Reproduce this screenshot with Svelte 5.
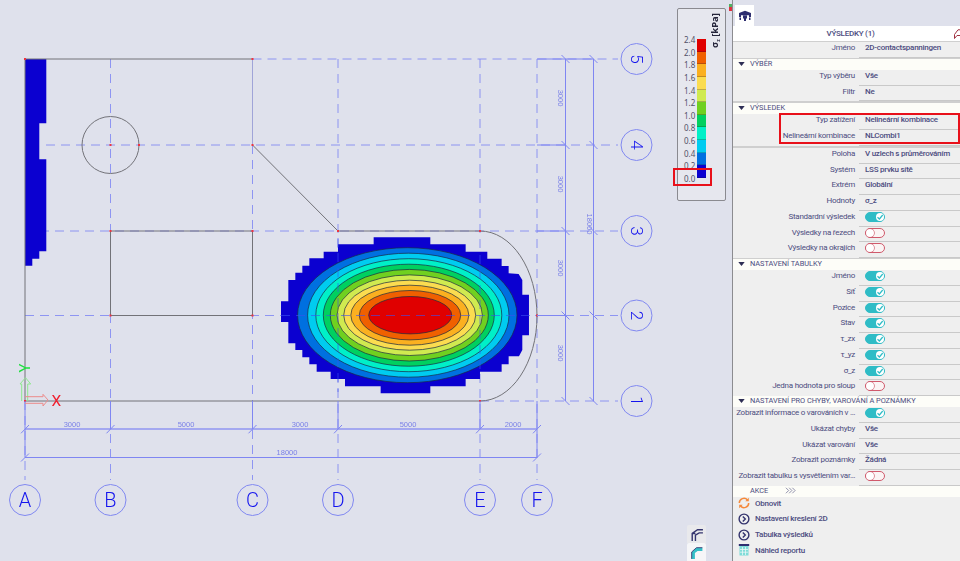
<script>
  const xs = [[25,'A'],[110.5,'B'],[252.5,'C'],[338,'D'],[480,'E'],[537,'F']];
  const ys = [[59,'5'],[145,'4'],[231,'3'],[315.5,'2'],[401,'1']];
  const gridX = [[25,401],[110.5,59],[252.5,145],[338,59],[480,59],[537,59]];
  const gridY = [[59,252.5],[145,46],[231,25],[315.5,25],[401,480]];
  const hDims = [[72,'3000'],[186,'5000'],[300,'3000'],[408,'5000'],[513,'2000']];
  const vDims = [[98,'3000'],[184,'3000'],[268,'3000'],[353,'3000']];
  const ell = [
    ['#0070e0',407.3,109.7,67.5],['#00ccf0',408.3,100.7,62],['#00f0c8',408.8,93,56.5],['#00d060',408.8,85.5,51],
    ['#70d020',409.3,79,45.8],['#d0ea50',409.7,72.7,40.3],['#fbdc50',409.7,66,35],['#fbb020',409.8,59,30],
    ['#f06000',410,50.7,24.7],['#e00000',410.2,41.5,18.7]
  ];
  const stair = '311,37 481,37 481,58 587,58 587,80 652,80 652,101 695,101 695,123 716,123 716,145 746,147 757,165 757,209 777,209 777,331 757,331 757,375 747,394 716,394 716,418 695,418 695,440 630,440 630,462 587,462 587,484 481,484 481,505 332,505 332,484 225,484 225,462 182,462 182,440 140,440 140,418 118,418 118,397 97,397 97,375 76,375 76,355 55,355 55,291 33,291 33,229 55,229 55,165 76,165 76,143 97,143 97,122 118,122 118,100 161,100 161,80 204,80 204,58 311,58';
  const nodes = [[25,59],[252.5,59],[110.5,145],[139,145],[252.5,145],[110.5,231],[252.5,231],[338,231],[480,231],[537,315.5],[110.5,315.5],[252.5,315.5],[25,401],[480,401]];
  const scale = [
    ['2.4','#e00000'],['2.0','#f06000'],['1.8','#fbb020'],['1.6','#fbdc50'],['1.4','#d0ea50'],['1.2','#70d020'],
    ['1.0','#00d060'],['0.8','#00f0c8'],['0.6','#00ccf0'],['0.4','#0070e0'],['0.2','#0b00d0'],['0.0','']
  ];
  const on = { t: true }, off = { t: false };
  const sections = [
    { rows: [['Jméno', '2D-contactspanningen']] },
    { title: 'VÝBĚR', rows: [['Typ výběru','Vše'],['Filtr','Ne']], sep: 1 },
    { title: 'VÝSLEDEK', rows: [['Typ zatížení','Nelineární kombinace'],['Nelineární kombinace','NLCombi1']], mark: true, sep: 2 },
    { rows: [['Poloha','V uzlech s průměrováním'],['Systém','LSS prvku sítě'],['Extrém','Globální'],['Hodnoty','σ_z'],['Standardní výsledek',on],['Výsledky na řezech',off],['Výsledky na okrajích',off]], sep: 2 },
    { title: 'NASTAVENÍ TABULKY', rows: [['Jméno',on],['Síť',on],['Pozice',on],['Stav',on],['τ_zx',on],['τ_yz',on],['σ_z',on],['Jedna hodnota pro sloup',off]], sep: 1 },
    { title: 'NASTAVENÍ PRO CHYBY, VAROVÁNÍ A POZNÁMKY', rows: [['Zobrazit informace o varováních v …',on],['Ukázat chyby','Vše'],['Ukázat varování','Vše'],['Zobrazit poznámky','Žádná'],['Zobrazit tabulku s vysvětlením var…',off]] }
  ];
</script>

<div class="page">
  <main class="canvas">
    <svg class="drawing" viewBox="0 0 733 561" width="733" height="561">
      <g class="grid">
        {#each gridX as [x, y0]}<line x1={x} y1={y0} x2={x} y2="480" />{/each}
        {#each gridY as [y, x0]}<line x1={x0} y1={y} x2="618" y2={y} />{/each}
      </g>
      <path class="strip" d="M25 59H46.3V123.3H39.3V159.3H46.3V251.3H39.3V258.7H32.3V265.7H25Z" />
      <g transform="translate(270 225) scale(.3333)">
        <polygon class="strip" points={stair} />
      </g>
      {#each ell as [c, cx, rx, ry]}
        <ellipse {cx} cy="315.2" {rx} {ry} fill={c} class="band" />
      {/each}
      <g class="grid over">
        <line x1="338" y1="238" x2="338" y2="392" />
        <line x1="480" y1="255" x2="480" y2="375" />
        <line x1="281" y1="315.5" x2="530" y2="315.5" />
      </g>
      <g class="struct">
        <path d="M25 401V59H252.5" />
        <path d="M25 401H480A57 85 0 0 0 480 231H338L252.5 145" />
        <path class="pale" d="M252.5 59V145" />
        <path d="M110.5 315.5V231H252.5V315.5H110.5" />
        <circle cx="110.5" cy="145" r="28.5" />
      </g>
      {#each nodes as [x, y]}<rect class="node" x={x - 1} y={y - 1} width="2" height="2" />{/each}

      <g class="dim">
        <path class="thick" d="M25 429H537" />
        <path d="M25 457.5H537M565.5 59V401M593.5 59V401" />
        <path d="M25 401V457.5M110.5 401V429M252.5 401V429M338 401V429M480 401V429M537 401V457.5" />
        <path d="M537 59H593.5M537 145H565.5M537 231H565.5M537 315.5H565.5" />
        {#each xs as [x]}<path d="M{x - 4} 433.3L{x + 4} 425" />{/each}
        <path d="M21 461.5L29 453.5M533 461.5L541 453.5" />
        {#each ys as [y]}<path d="M561.5 {y - 4}L569.5 {y + 4}" /><path d="M589.5 {y - 4}L597.5 {y + 4}" />{/each}
      </g>
      {#each hDims as [x, t]}<text class="dimtext" {x} y="427" text-anchor="middle">{t}</text>{/each}
      <text class="dimtext" x="287" y="455" text-anchor="middle">18000</text>
      {#each vDims as [y, t]}<text class="dimtext" transform="translate(558 {y}) rotate(90)" text-anchor="middle">{t}</text>{/each}
      <text class="dimtext" transform="translate(586.500 224) rotate(90)" text-anchor="middle">18000</text>

      {#each xs as [x, t]}
        <circle class="axis" cx={x} cy="500" r="15.5" />
        <text class="axlabel" {x} y="507" text-anchor="middle">{t}</text>
      {/each}
      {#each ys as [y, t]}
        <circle class="axis" cx="636.5" cy={y} r="15.5" />
        <text class="axlabel digit" transform="translate(631 {y}) rotate(90)" text-anchor="middle">{t}</text>
      {/each}

      <path class="arrow-g" d="M21.7 401V384H20L25.500 377.700L30.700 384H27.700V401" />
      <path class="arrow-r" d="M25 396.700H43V394.300L48 400L43 406V403.300H25" />
      <text class="letter-x" x="56.300" y="406" text-anchor="middle">X</text>
      <text class="letter-y" transform="translate(30 368) rotate(-90)" text-anchor="middle">Y</text>
    </svg>

    <aside class="legend">
      <span class="legend-title">σ<sub>z</sub> [kPa]</span>
      <div class="legend-scale">
        {#each scale as [v, c]}
          <div class="legend-row">
            <span class="legend-val">{v}</span>
            {#if c}<span class="legend-swatch" style="background:{c}"></span>{/if}
          </div>
        {/each}
      </div>
    </aside>
    <div class="hl hl-legend"></div>

    <div class="sidetabs">
      <div class="stab">
        <svg viewBox="0 0 14 14" width="15" height="15"><path class="ic-navy" d="M3 13V6L8 2.500H13M6 13V7.500L9.500 5.500H13M3 6H6" /></svg>
      </div>
      <div class="stab active">
        <svg viewBox="0 0 14 14" width="15" height="15"><path class="ic-teal" d="M2.500 13V6.500L7 2.500H12.500V5.500H8L5.500 7.500V13Z" /><path class="ic-navy thin" d="M2.500 13V6.500L7 2.500H12.500" /></svg>
      </div>
    </div>
    <span class="warn"></span>
  </main>

  <section class="panel">
    <div class="tabbar">
      <div class="tab">
        <svg viewBox="0 0 14 12" width="14" height="12"><path class="ic-fill" d="M1 3L7 .8 13 3V7H11V5.200H3V7H1ZM5 5.500H9V8.500H8V11H6V8.500H5ZM1.500 7.500H3V10H1.500ZM11 7.500H12.500V10H11Z" /></svg>
      </div>
    </div>
    <header class="phead">
      <span>VÝSLEDKY (1)</span>
      <svg class="pen" viewBox="0 0 8 10" width="8" height="10"><path d="M.5 9.500V5.500L4 .8H8M.5 9.500L3 6.500H8" /></svg>
    </header>

    {#each sections as s}
      {#if s.title}
        <div class="sechead" class:gap1={s.sep === 1} class:gap2={s.sep === 2}>
          <svg viewBox="0 0 8 5" width="7" height="4"><path d="M0 0H8L4 5Z" /></svg>
          <span>{s.title}</span>
        </div>
      {:else if s.sep}
        <div class="sep"></div>
      {/if}
      <div class="rows" class:marked={s.mark}>
        {#each s.rows as [label, val]}
          <div class="row">
            <span class="lab">{label}</span>
            <span class="val">
              {#if typeof val === 'string'}
                {val}
              {:else}
                <span class="toggle" class:on={val.t}>
                  <span class="knob">
                    {#if val.t}<svg viewBox="0 0 8 8" width="8" height="8"><path d="M1.500 4.200L3.400 6 6.700 2" /></svg>{/if}
                  </span>
                </span>
              {/if}
            </span>
          </div>
        {/each}
        {#if s.mark}<div class="hl hl-rows"></div>{/if}
      </div>
    {/each}

    <div class="sechead">
      <span class="akce">AKCE</span>
      <svg class="chev" viewBox="0 0 12 7" width="11" height="7"><path d="M1 .5L4 3.500 1 6.500M4.500 .5L7.500 3.500 4.500 6.500M8 .5L11 3.500 8 6.500" /></svg>
    </div>
    <div class="act">
      <svg viewBox="0 0 12 12" width="12" height="12"><path class="ic-orange" d="M1.300 6A4.700 4.700 0 0 1 9.500 2.900M10.700 6A4.700 4.700 0 0 1 2.500 9.100" /><path class="ic-orange-f" d="M10.800 .8V4.300H7.300ZM1.200 11.200V7.700H4.700Z" /></svg>
      <span>Obnovit</span>
    </div>
    <div class="act">
      <svg viewBox="0 0 12 12" width="12" height="12"><circle class="ic-navy ring" cx="6" cy="6" r="4.900" /><path class="ic-navy ring" d="M4.800 3.500L7.300 6 4.800 8.500" /></svg>
      <span>Nastavení kreslení 2D</span>
    </div>
    <div class="act">
      <svg viewBox="0 0 12 12" width="12" height="12"><circle class="ic-navy ring" cx="6" cy="6" r="4.900" /><path class="ic-navy ring" d="M4.800 3.500L7.300 6 4.800 8.500" /></svg>
      <span>Tabulka výsledků</span>
    </div>
    <div class="act">
      <svg viewBox="0 0 12 12" width="12" height="12"><rect class="rep" x="1.500" y="2" width="9" height="9.500" /><path class="repgrid" d="M4.500 3V11M7.500 3V11M2 5.500H10M2 8.200H10" /><rect class="reptop" x=".8" y="0" width="10.400" height="2" /></svg>
      <span>Náhled reportu</span>
    </div>
  </section>
</div>

<style>
  :global(body) { margin: 0; background: #dfe1ec; }
  .page {
    width: 960px; height: 561px; display: flex; overflow: hidden;
    background: #dfe1ec;
    font-family: "Roboto", "Liberation Sans", sans-serif;
  }
  .canvas { position: relative; width: 732px; height: 561px; flex: none; }
  .drawing { display: block; filter: blur(.25px); }
  .grid line { stroke: #8088f4; stroke-width: 1; stroke-dasharray: 9 6; opacity: .85; }
  .grid.over line { opacity: .6; stroke: #3c50f0; }
  .strip { fill: #0b00d0; }
  .band { stroke: #1a2a40; stroke-width: .7; }
  .struct path, .struct circle { fill: none; stroke: #727278; stroke-width: 1; }
  .struct .pale { stroke: #a0a4d8; }
  .node { fill: #ee3340; }
  .dim path { fill: none; stroke: #7f86f2; stroke-width: 1; }
  .dim .thick { stroke: #a4a8f0; stroke-width: 2; }
  .dimtext { font: 7.500px "Liberation Sans", sans-serif; fill: #7a80e8; }
  .axis { fill: none; stroke: #8088f0; stroke-width: 1; }
  .axlabel { font: 300 20px "Roboto", sans-serif; fill: #1414ee; }
  .axlabel.digit { font-size: 17px; }
  .arrow-g { fill: none; stroke: #8ee88e; stroke-width: 1; }
  .arrow-r { fill: none; stroke: #ec8a8a; stroke-width: 1; }
  .letter-x { font: 400 15.500px "Roboto", sans-serif; fill: #f02030; }
  .letter-y { font: 400 15px "Roboto", sans-serif; fill: #20e040; }

  .legend {
    position: absolute; left: 677px; top: 8px; width: 47px; height: 191px;
    background: #e6e7ee; border: 1px solid #8a8a90; border-radius: 2px;
  }
  .legend-title {
    position: absolute; left: 31px; top: 5px; height: 34px;
    writing-mode: vertical-rl; transform: rotate(180deg);
    font: 700 9.500px/12px "Noto Sans", sans-serif; color: #24243a; white-space: nowrap; text-align: left;
  }
  .legend-title sub { font-size: 5px; }
  .legend-scale { position: absolute; left: 0; top: 30px; display: flex; flex-direction: column; }
  .legend-row { height: 12.650px; position: relative; width: 40px; }
  .legend-val {
    position: absolute; left: 6px; top: -5px;
    font: 8px/12px "Noto Sans", sans-serif; color: #505068;
  }
  .legend-swatch {
    position: absolute; left: 19px; top: 0; width: 9px; height: 12.650px;
    box-shadow: inset 0 -.5px 0 rgba(20,20,40,.5);
  }
  .hl { position: absolute; border: 2px solid #e8101a; box-sizing: border-box; pointer-events: none; }
  .hl-legend { left: 673px; top: 168px; width: 39px; height: 18px; }
  .sidetabs { position: absolute; left: 687px; top: 525px; width: 19px; display: flex; flex-direction: column; }
  .stab { height: 18px; background: #e9e9ec; display: flex; align-items: center; justify-content: center; border-radius: 2px 2px 0 0; }
  .stab.active { background: #f6f6f8; }
  .warn { position: absolute; left: 729px; top: 4px; width: 3px; height: 7px; background: linear-gradient(#50b060 50%, #e03040 50%); }

  .panel {
    width: 228px; height: 561px; flex: none; box-sizing: border-box;
    border-left: 1.500px solid #8c8c90; background: #efefef; color: #4c4c80;
    font-size: 8px; letter-spacing: -.25px; overflow: hidden;
  }
  .tabbar { height: 26px; background: #dfe1ec; display: flex; align-items: flex-end; padding-left: 2px; box-sizing: border-box; }
  .tab { width: 19px; height: 21px; background: #fff; display: flex; justify-content: center; padding-top: 5px; box-sizing: border-box; }
  .phead {
    height: 16px; background: #fff; display: flex; align-items: center; justify-content: center;
    font-weight: 500; border-bottom: 1px solid #cfcfcf; box-sizing: border-box; position: relative; padding-left: 8px;
  }
  .pen { position: absolute; right: -2px; top: 3px; }
  .pen path { fill: none; stroke: #a03040; stroke-width: 1; }
  .sechead {
    height: 11px; background: #fdfdf8; display: flex; align-items: center; gap: 5px; padding: 0 0 1px 5px; box-sizing: border-box;
    line-height: 10px; font-size: 7.400px; letter-spacing: -.03px;
  }
  .sechead span { letter-spacing: -.03px; }
  .sechead.gap1 { border-top: 1px solid #cfcfcf; height: 12px; }
  .sechead.gap2 { border-top: 2px solid #cfcfcf; height: 13px; }
  .sechead svg path { fill: #2e2e54; }
  .sep { height: 2px; background: #cfcfcf; }
  .rows { position: relative; }
  .row { height: 15.750px; display: grid; grid-template-columns: 125px 1fr; box-sizing: border-box; }
  .lab { text-align: right; padding-right: 3px; line-height: 12.500px; white-space: nowrap; overflow: hidden; }
  .val { border-bottom: 1.500px solid #c9c9c9; padding-left: 6px; font-weight: 500; line-height: 12.500px; margin-left: 1px; white-space: nowrap; overflow: hidden; }
  .hl-rows { left: 46px; top: -1px; width: 181px; height: 31px; }
  .toggle {
    display: block; width: 19.500px; height: 10px; margin-top: 1px; border-radius: 5px;
    box-sizing: border-box; border: 1px solid #d05a6c; background: #fbf4f4; position: relative;
  }
  .toggle.on { background: #2fbcc6; border-color: #2fbcc6; }
  .knob {
    position: absolute; left: 0; top: 0; width: 8px; height: 8px; border-radius: 50%;
    background: #fff; box-shadow: 0 0 0 .7px #d05a6c; display: block;
  }
  .toggle.on .knob { left: auto; right: 0; box-shadow: none; }
  .knob svg { display: block; }
  .knob path { fill: none; stroke: #2fbcc6; stroke-width: 1.200; }
  .akce { padding-left: 12px; width: 30px; }
  .chev path { fill: none !important; stroke: #6a6a90; stroke-width: .8; }
  .act { height: 15.750px; display: flex; align-items: center; gap: 5px; padding-left: 5px; font-weight: 500; position: relative; top: -1.500px; }
  .act svg { flex: none; }
  .ic-navy { fill: none; stroke: #34346e; stroke-width: 1.300; }
  .ic-navy.thin { stroke-width: .8; }
  .ring { stroke-width: 1.400; }
  .ic-teal { fill: #35c0c8; }
  .ic-fill { fill: #2e2e70; }
  .ic-orange { fill: none; stroke: #f58a3c; stroke-width: 1.500; }
  .ic-orange-f { fill: #f58a3c; }
  .rep { fill: #7fdcd8; }
  .repgrid { stroke: #eaf8f8; stroke-width: .8; fill: none; }
  .reptop { fill: #2e2e70; }
</style>
